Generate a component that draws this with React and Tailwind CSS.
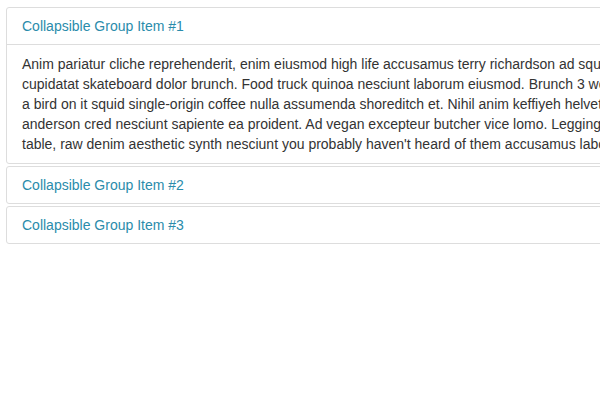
const bodyLines = [
    "Anim pariatur cliche reprehenderit, enim eiusmod high life accusamus terry richardson ad squid. 3 wolf moon officia aute, non",
    "cupidatat skateboard dolor brunch. Food truck quinoa nesciunt laborum eiusmod. Brunch 3 wolf moon tempor, sunt aliqua put",
    "a bird on it squid single-origin coffee nulla assumenda shoreditch et. Nihil anim keffiyeh helvetica, craft beer labore wes",
    "anderson cred nesciunt sapiente ea proident. Ad vegan excepteur butcher vice lomo. Leggings occaecat craft beer farm-to-",
    "table, raw denim aesthetic synth nesciunt you probably haven't heard of them accusamus labore sustainable VHS.",
];

const items = [
    { title: "Collapsible Group Item #1", open: true },
    { title: "Collapsible Group Item #2", open: false },
    { title: "Collapsible Group Item #3", open: false },
];

const App = () => {
    return (
        <div className="w-[600px] h-[400px] overflow-hidden bg-white font-['Liberation_Sans',Arial,sans-serif]">
            <div className="pt-[7px] pl-[6px] flex flex-col gap-[2px] w-[900px]">
                {items.map((item) => (
                    <div key={item.title} className="border border-[#dddddd] rounded-[3px] bg-white">
                        <div className="px-[15px] py-[10px] text-[14px] leading-[16px]">
                            <a href="#" className="text-[#2a8cab] no-underline">
                                {item.title}
                            </a>
                        </div>
                        {item.open && (
                            <div className="border-t border-[#dddddd] px-[15px] pt-[9px] h-[119px] overflow-hidden">
                                {bodyLines.map((line, i) => (
                                    <p key={i} className="whitespace-nowrap text-[14px] leading-[20px] text-[#333333]">
                                        {line}
                                    </p>
                                ))}
                            </div>
                        )}
                    </div>
                ))}
            </div>
        </div>
    );
};

export default App;
